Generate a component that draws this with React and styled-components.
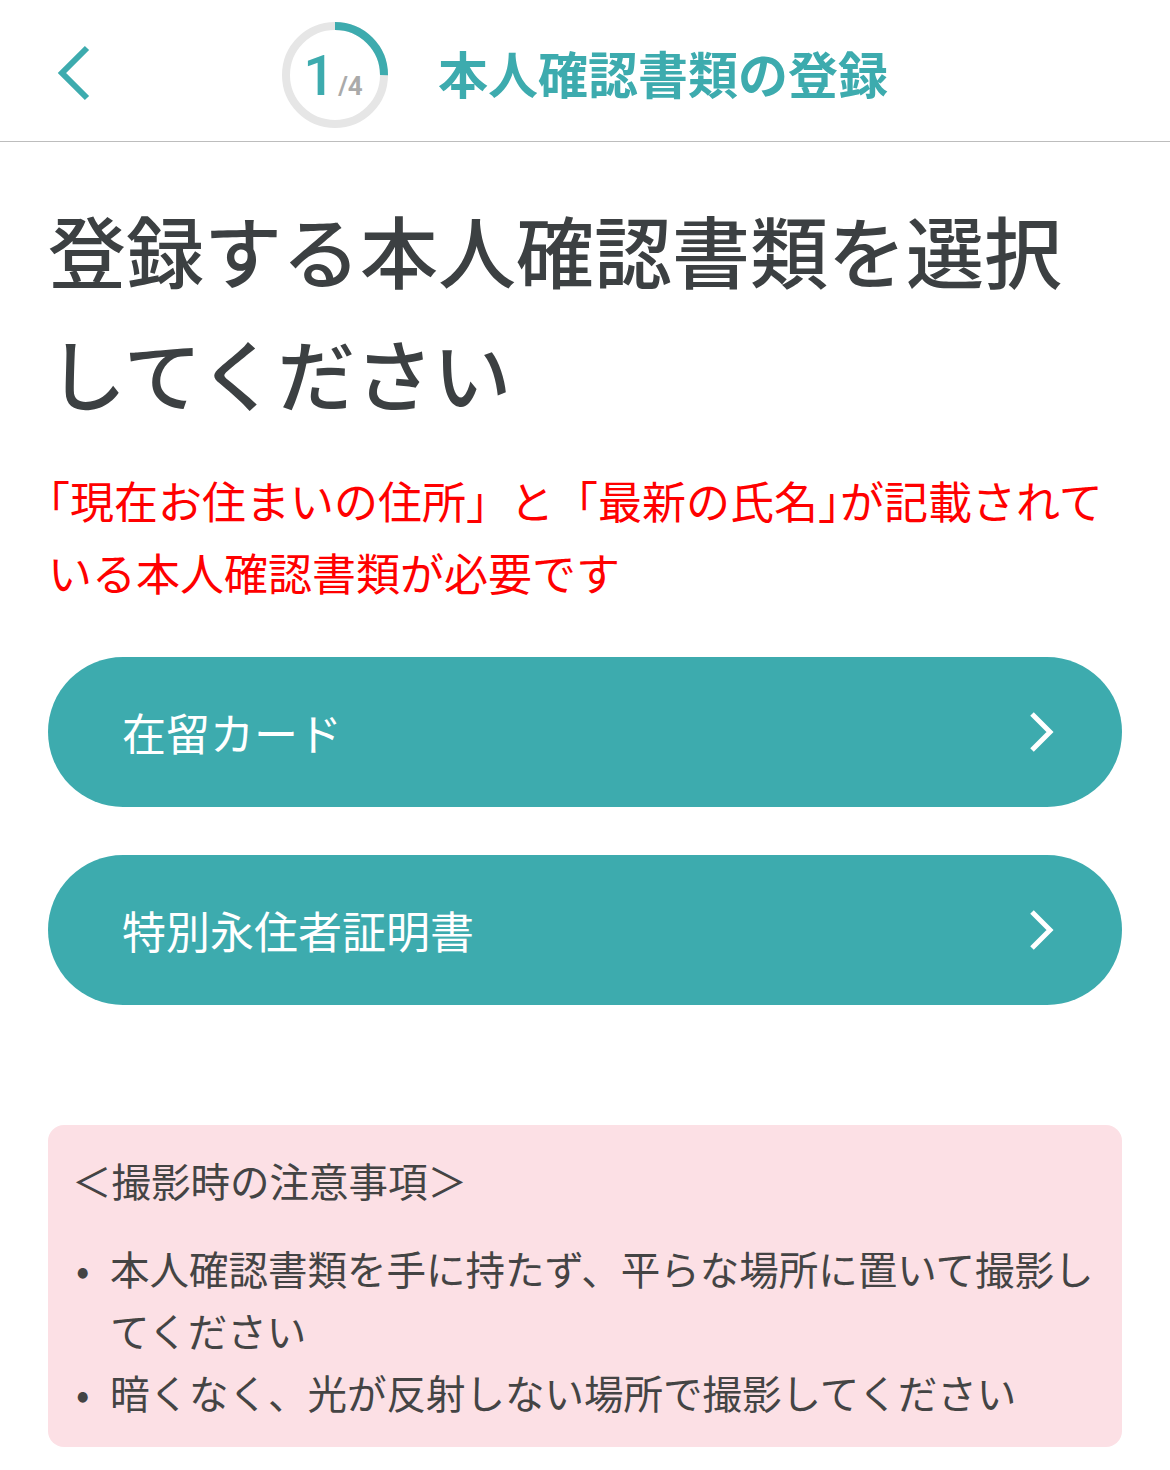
import styled, { createGlobalStyle } from 'styled-components';

const GlobalStyle = createGlobalStyle`
  body {
    margin: 0;
    background: #fff;
    font-family: "Noto Sans CJK JP", "Noto Sans", sans-serif;
  }
  * {
    box-sizing: border-box;
  }
`;

const Page = styled.div`
  width: 1170px;
  min-height: 1470px;
  background: #fff;
`;

const Header = styled.header`
  height: 142px;
  display: grid;
  grid-template-columns: 1fr auto 1fr;
  align-items: center;
  border-bottom: 1px solid #bdbdbd;
`;

const BackButton = styled.button`
  justify-self: start;
  margin: 4px 0 0 52px;
  width: 44px;
  height: 60px;
  padding: 0;
  border: none;
  background: none;
  display: flex;
  align-items: center;
  justify-content: center;
  cursor: pointer;
`;

const HeaderCenter = styled.div`
  display: flex;
  align-items: center;
  gap: 50px;
  margin-top: 8px;
`;

const Progress = styled.div`
  position: relative;
  width: 106px;
  height: 106px;
  flex-shrink: 0;
`;

const ProgressLabel = styled.div`
  position: absolute;
  inset: 0;
  display: flex;
  align-items: baseline;
  justify-content: center;
  padding: 26px 4px 0 0;
  font-family: Roboto, "Noto Sans", sans-serif;
  font-weight: 500;
`;

const Current = styled.span`
  font-size: 56px;
  line-height: 1;
  color: #3dabae;
`;

const Total = styled.span`
  font-size: 26px;
  font-weight: 700;
  color: #aaaaaa;
  margin-left: 3px;
`;

const HeaderTitle = styled.h1`
  margin: 0 0 6px;
  font-size: 50px;
  font-weight: 700;
  color: #3dabae;
  white-space: nowrap;
`;

const Main = styled.main`
  padding: 46px 48px 0;
`;

const Heading = styled.h2`
  margin: 0;
  font-size: 78px;
  line-height: 123px;
  font-weight: 500;
  color: #3c4042;
`;

const Warning = styled.p`
  margin: 30px 0 0;
  font-size: 44px;
  line-height: 72px;
  color: #ff0000;
`;

/* brackets that the original sets at half width */
const HalfBracket = styled.span`
  font-feature-settings: "halt";
`;

const Options = styled.div`
  display: flex;
  flex-direction: column;
  gap: 48px;
  margin-top: 49px;
`;

const OptionButton = styled.button`
  width: 100%;
  height: 150px;
  border: none;
  border-radius: 75px;
  background: #3dabae;
  color: #fff;
  display: flex;
  align-items: center;
  justify-content: space-between;
  padding: 0 66px 0 74px;
  font-family: "Noto Sans CJK JP", "Noto Sans", sans-serif;
  font-size: 44px;
  font-weight: 400;
  cursor: pointer;
`;

const Notice = styled.section`
  margin-top: 120px;
  background: #fce0e5;
  border-radius: 16px;
  padding: 24px;
  color: #444444;
  font-size: 39.5px;
  line-height: 62px;
`;

const NoticeTitle = styled.h3`
  margin: 0 0 26px;
  font-size: 39.5px;
  line-height: 62px;
  font-weight: 400;
`;

const NoticeList = styled.ul`
  margin: 0;
  padding: 0;
  list-style: none;
`;

const NoticeItem = styled.li`
  display: flex;
`;

const Bullet = styled.span`
  flex: 0 0 38px;
  padding-left: 4px;
`;

function ProgressRing({ step, total }) {
  const r = 49;
  const c = 2 * Math.PI * r;
  return (
    <Progress>
      <svg width="106" height="106" viewBox="0 0 106 106">
        <circle cx="53" cy="53" r={r} fill="none" stroke="#e6e6e6" strokeWidth="8" />
        <circle
          cx="53"
          cy="53"
          r={r}
          fill="none"
          stroke="#3dabae"
          strokeWidth="8"
          strokeDasharray={`${(c * step) / total} ${c}`}
          transform="rotate(-90 53 53)"
        />
      </svg>
      <ProgressLabel>
        <Current>{step}</Current>
        <Total>/{total}</Total>
      </ProgressLabel>
    </Progress>
  );
}

const options = ['在留カード', '特別永住者証明書'];

const notes = [
  '本人確認書類を手に持たず、平らな場所に置いて撮影してください',
  '暗くなく、光が反射しない場所で撮影してください'
];

export default function App() {
  return (
    <Page>
      <GlobalStyle />
      <Header>
        <BackButton aria-label="戻る">
          <svg width="36" height="56" viewBox="0 0 36 56" fill="none">
            <path d="M31 3 L6 28 L31 53" stroke="#3dabae" strokeWidth="6" />
          </svg>
        </BackButton>
        <HeaderCenter>
          <ProgressRing step={1} total={4} />
          <HeaderTitle>本人確認書類の登録</HeaderTitle>
        </HeaderCenter>
        <div />
      </Header>
      <Main>
        <Heading>登録する本人確認書類を選択してください</Heading>
        <Warning>
          <HalfBracket>「</HalfBracket>現在お住まいの住所」と「最新の氏名<HalfBracket>」</HalfBracket>
          が記載されている本人確認書類が必要です
        </Warning>
        <Options>
          {options.map((label) => (
            <OptionButton key={label}>
              <span>{label}</span>
              <svg width="30" height="44" viewBox="0 0 30 44" fill="none">
                <path d="M6 4 L24 22 L6 40" stroke="#fff" strokeWidth="5" />
              </svg>
            </OptionButton>
          ))}
        </Options>
        <Notice>
          <NoticeTitle>＜撮影時の注意事項＞</NoticeTitle>
          <NoticeList>
            {notes.map((note) => (
              <NoticeItem key={note}>
                <Bullet>•</Bullet>
                <span>{note}</span>
              </NoticeItem>
            ))}
          </NoticeList>
        </Notice>
      </Main>
    </Page>
  );
}
